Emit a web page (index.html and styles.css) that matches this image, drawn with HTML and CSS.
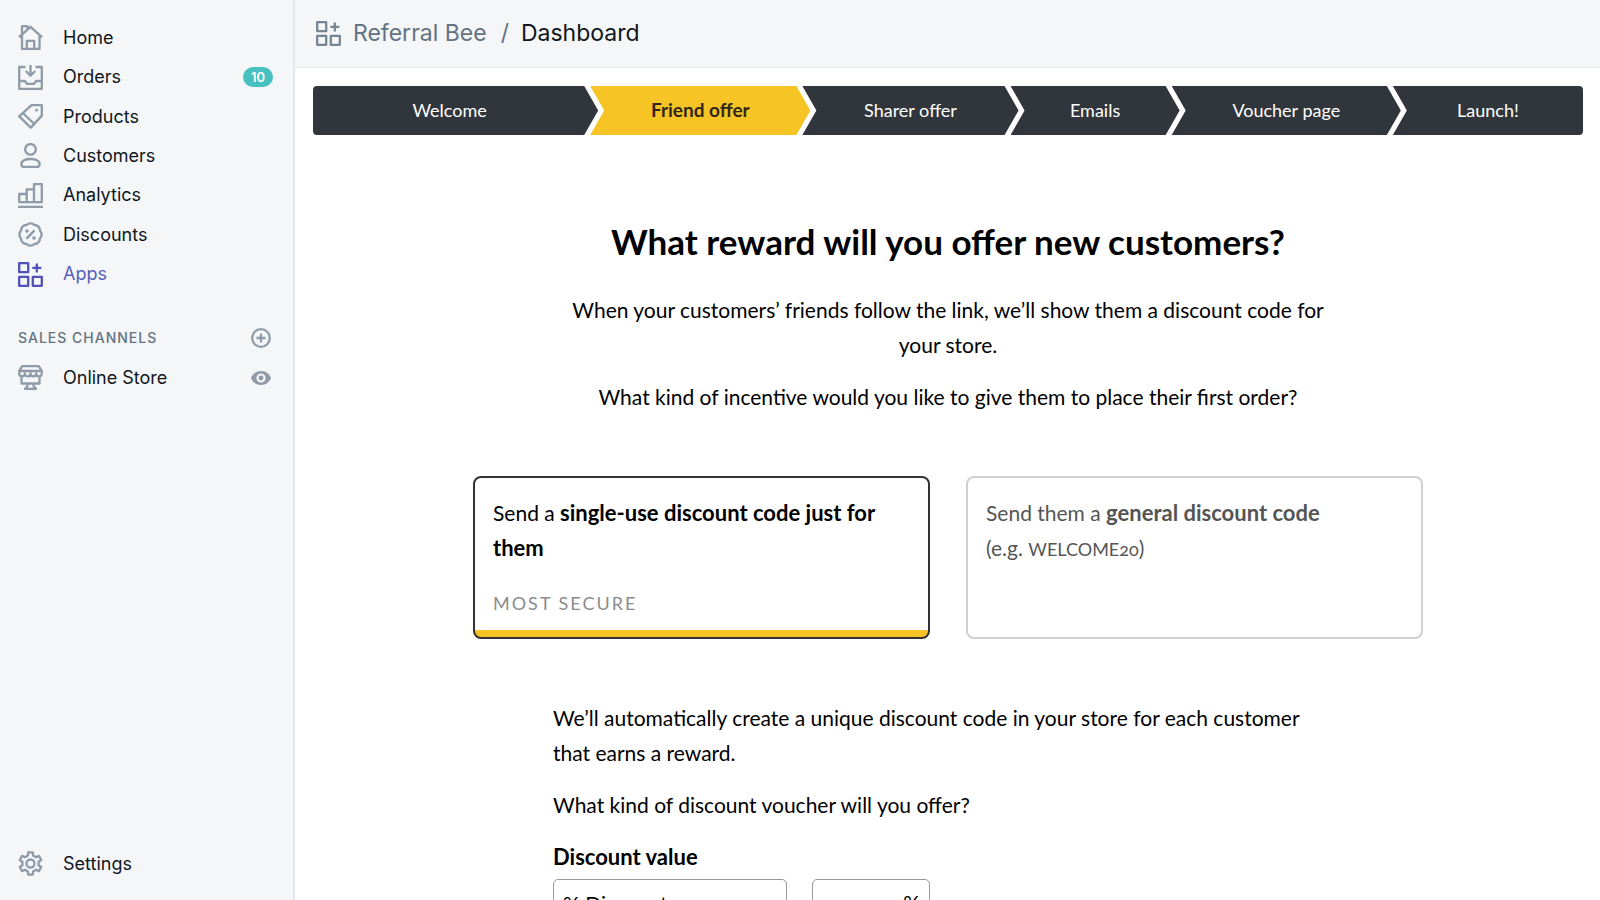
FILE: index.html
```html
<!DOCTYPE html>
<html lang="en">
<head>
  <meta charset="UTF-8">
  <meta name="viewport" content="width=device-width, initial-scale=1.0">
  <title>Referral Bee - Dashboard</title>
  <link rel="stylesheet" href="styles.css">
</head>
<body>
  <div class="app">
    <nav class="sidebar">
      <div class="nav-main">
        <a class="nav-item" href="#">
          <svg class="icon" viewBox="0 0 25 25"><path d="M1 12.2L12.5 1.8 24 12.2M4 9.8V24h17.5V9.8M4 9V1.2h5.5v2.5M8.8 24v-8.2h7.4V24"/></svg>
          Home
        </a>
        <a class="nav-item" href="#">
          <svg class="icon" viewBox="0 0 25 25"><path d="M7.5 2H1.2v21.8h22.6V2h-6.3M12.5 0v10M7.8 6l4.7 4.7L17.2 6M1.2 16h5.6l2.2 2.8h7l2.2-2.8h5.6"/></svg>
          Orders
          <span class="badge">10</span>
        </a>
        <a class="nav-item" href="#">
          <svg class="icon" viewBox="0 0 25 25"><path d="M13.6 1.2h10.2v10.4L12.8 23.6 1.2 12.4zM4.8 9l11.6 11"/><circle class="solid" cx="18.6" cy="6.2" r="1.4"/></svg>
          Products
        </a>
        <a class="nav-item" href="#">
          <svg class="icon" viewBox="0 0 25 25"><circle cx="12.5" cy="6.4" r="5.3"/><path d="M3.4 21c0-3.2 4-5 9.1-5s9.1 1.8 9.1 5c0 1.900-.7 2.800-2.200 2.800H5.600c-1.500 0-2.200-.9-2.200-2.800z"/></svg>
          Customers
        </a>
        <a class="nav-item" href="#">
          <svg class="icon" viewBox="0 0 25 25"><path d="M1.2 11h7.5v8.2H1.2zM8.700 19.200V6.400h7.300M16 1.200h7.800v18H16zM8.700 19.200H16M0 23.800h25"/></svg>
          Analytics
        </a>
        <a class="nav-item" href="#">
          <svg class="icon" viewBox="0 0 25 25"><path d="M22 8.600a5.500 5.500 0 0 1 0 7.800 5.500 5.500 0 0 1-5.600 5.600 5.500 5.500 0 0 1-7.800 0A5.500 5.500 0 0 1 3 16.400a5.500 5.500 0 0 1 0-7.800A5.500 5.500 0 0 1 8.600 3a5.500 5.500 0 0 1 7.800 0A5.500 5.500 0 0 1 22 8.600zM16.500 8.400l-8 8.200"/><circle class="solid" cx="9" cy="9" r="1.8"/><circle class="solid" cx="16" cy="16" r="1.8"/></svg>
          Discounts
        </a>
        <a class="nav-item active" href="#">
          <svg class="icon" viewBox="0 0 25 25"><path d="M1.2 1.2h9v9h-9zM1.2 14.800h9v9h-9zM14.800 14.800h9v9h-9zM18.800 1.400v9M14.300 5.900h9"/></svg>
          Apps
        </a>
      </div>

      <div class="nav-heading">
        <h2>Sales channels</h2>
        <button class="icon-button" aria-label="Add sales channel">
          <svg class="icon-small" viewBox="0 0 20 20"><circle cx="10" cy="10" r="8.8"/><path d="M10 5.500v9M5.500 10h9"/></svg>
        </button>
      </div>
      <div class="nav-row">
        <a class="nav-item" href="#">
          <svg class="icon" viewBox="0 0 25 25"><path d="M4.200 1.200h16.600l3 5v2.300a2.800 2.800 0 0 1-5.600 0 2.800 2.800 0 0 1-5.700 0 2.800 2.800 0 0 1-5.700 0 2.800 2.800 0 0 1-5.600 0V6.200zM1.500 6h22M3.500 11v7.500h18V11M9.500 18.500v2.500l-2.500 2.800h11L15.500 21v-2.500"/></svg>
          Online Store
        </a>
        <button class="icon-button" aria-label="View online store">
          <svg class="icon-small" viewBox="0 0 20 20"><path class="solid" fill-rule="evenodd" d="M0 10c1.500-4.200 5.200-7 10-7s8.500 2.800 10 7c-1.500 4.200-5.200 7-10 7S1.500 14.200 0 10zm10-4.600a4.600 4.600 0 1 0 0 9.200 4.600 4.600 0 0 0 0-9.200z"/><circle class="solid" cx="10" cy="10" r="2.4"/></svg>
        </button>
      </div>

      <a class="nav-item nav-settings" href="#">
        <svg class="icon" viewBox="0 0 25 25"><path d="M9.900 4.600l.3-3.200h4.600l.3 3.200 3 1.700 2.800-1.400L23.200 9l-2.600 1.800v3.400l2.600 1.800-2.300 4.100-2.800-1.400-3 1.700-.3 3.200h-4.600l-.3-3.200-3-1.700-2.800 1.400L1.800 16l2.600-1.800v-3.400L1.800 9l2.300-4.100 2.800 1.400z"/><circle cx="12.5" cy="12.5" r="4"/></svg>
        Settings
      </a>
    </nav>

    <div class="page">
      <header class="topbar">
        <svg class="icon" viewBox="0 0 25 25"><path d="M1.2 1.2h9v9h-9zM1.2 14.800h9v9h-9zM14.800 14.800h9v9h-9zM18.800 1.400v9M14.300 5.900h9"/></svg>
        <a class="crumb" href="#">Referral Bee</a>
        <span class="crumb-sep">/</span>
        <span class="crumb-current">Dashboard</span>
      </header>

      <main class="content">
        <nav class="steps">
          <a class="step step-welcome" href="#">Welcome</a>
          <a class="step step-friend current" href="#">Friend offer</a>
          <a class="step step-sharer" href="#">Sharer offer</a>
          <a class="step step-emails" href="#">Emails</a>
          <a class="step step-voucher" href="#">Voucher page</a>
          <a class="step step-launch" href="#">Launch!</a>
        </nav>

        <section class="intro">
          <h1>What reward will you offer new customers?</h1>
          <p>When your customers’ friends follow the link, we’ll show them a discount code for<br>your store.</p>
          <p>What kind of incentive would you like to give them to place their first order?</p>
        </section>

        <form>
          <div class="options">
            <label class="option">
              <input type="radio" name="codeType" value="single" checked>
              <span>Send a <strong>single-use discount code just for<br>them</strong></span>
              <span class="option-note">Most secure</span>
            </label>
            <label class="option">
              <input type="radio" name="codeType" value="general">
              <span>Send them a <strong>general discount code</strong><br>(e.g. <span class="code">WELCOME20</span>)</span>
            </label>
          </div>

          <div class="details">
            <p>We’ll automatically create a unique discount code in your store for each customer<br>that earns a reward.</p>
            <p>What kind of discount voucher will you offer?</p>
            <label class="field-label" for="discountType">Discount value</label>
            <div class="fields">
              <select id="discountType">
                <option>% Discount</option>
              </select>
              <div class="amount">
                <input type="text" id="discountAmount" aria-label="Discount amount">
                <span>%</span>
              </div>
            </div>
          </div>
        </form>
      </main>
    </div>
  </div>
</body>
</html>
```
FILE: styles.css
```css
* {
  box-sizing: border-box;
}
body {
  margin: 0;
  font-family: Lato, sans-serif;
  font-size: 21px;
  line-height: 35px;
  color: #000;
  background: #fff;
}
a {
  color: inherit;
  text-decoration: none;
}
.app {
  display: flex;
  height: 100vh;
}

/* Sidebar */
.sidebar {
  display: flex;
  flex-direction: column;
  flex: none;
  width: 295px;
  padding: 18px 20px 17px 18px;
  background: #f4f6f8;
  border-right: 2px solid #e3e6ec;
  font-family: Inter, sans-serif;
  font-size: 18px;
  line-height: 24px;
  color: #10161d;
}
.nav-main {
  display: grid;
  grid-auto-rows: 1fr;
  min-height: 276px;
}
.nav-item {
  display: flex;
  align-items: center;
  gap: 20px;
  min-height: 39px;
}
.nav-item.active {
  color: #5460bd;
}
.icon,
.icon-small {
  flex: none;
  width: 25px;
  height: 25px;
  fill: none;
  stroke: #8f9ba8;
  stroke-width: 2.3;
  stroke-linejoin: round;
}
.icon-small {
  display: block;
  width: 20px;
  height: 20px;
}
.active .icon {
  stroke: #5050b8;
}
.solid {
  fill: #8f9ba8;
  stroke: none;
}
.badge {
  margin-left: auto;
  padding: 0 8px;
  border-radius: 10px;
  background: #47c1bf;
  color: #fff;
  font-size: 13px;
  font-weight: 600;
  line-height: 20px;
}
.nav-heading,
.nav-row {
  display: flex;
  align-items: center;
  justify-content: space-between;
  padding-right: 2px;
}
.nav-heading {
  min-height: 40px;
  margin-top: 24px;
}
.nav-heading h2 {
  margin: 0;
  font-size: 14px;
  font-weight: 500;
  letter-spacing: 1px;
  text-transform: uppercase;
  color: #637381;
}
.icon-button {
  padding: 0;
  border: 0;
  background: none;
  cursor: pointer;
}
.nav-settings {
  margin-top: auto;
}

/* Page header */
.page {
  display: flex;
  flex-direction: column;
  flex: 1;
  min-width: 0;
}
.topbar {
  display: flex;
  align-items: center;
  flex: none;
  height: 68px;
  padding: 0 21px;
  background: #f4f6f8;
  border-bottom: 1px solid #e3e6ea;
  font-family: Inter, sans-serif;
  font-size: 23px;
  color: #10161d;
}
.topbar .icon {
  stroke: #758594;
}
.crumb {
  margin-left: 12px;
}
.crumb,
.crumb-sep {
  color: #637381;
}
.crumb-sep {
  margin: 0 12px 0 14px;
}
.content {
  flex: 1;
  overflow: auto;
  padding: 18px 17px 40px 18px;
  scrollbar-width: none;
}

/* Steps */
.steps {
  display: flex;
  border-radius: 4px;
  overflow: hidden;
  font-size: 18px;
  line-height: 48px;
  color: #fff;
}
.step {
  margin-left: -8px;
  padding-bottom: 1px;
  background: #31363d;
  text-align: center;
  white-space: nowrap;
  clip-path: polygon(0 0, calc(100% - 14px) 0, 100% 50%, calc(100% - 14px) 100%, 0 100%, 14px 50%);
}
.step-welcome {
  flex: 273 1 0;
  margin-left: 0;
  padding-right: 12px;
  clip-path: polygon(0 0, calc(100% - 14px) 0, 100% 50%, calc(100% - 14px) 100%, 0 100%);
}
.step-friend {
  flex: 220 1 0;
}
.step-sharer {
  flex: 216 1 0;
}
.step-emails {
  flex: 169 1 0;
}
.step-voucher {
  flex: 229 1 0;
}
.step-launch {
  flex: 190 1 0;
  clip-path: polygon(0 0, 100% 0, 100% 100%, 0 100%, 14px 50%);
}
.step.current {
  background: #f6c425;
  color: #31261a;
  font-size: 19px;
  font-weight: bold;
}

/* Intro */
.intro {
  margin-top: 82px;
  text-align: center;
}
h1 {
  margin: 0;
  font-size: 35px;
  line-height: 48px;
}
p {
  margin: 0 0 17px;
}
.intro h1 {
  margin-bottom: 27px;
}

/* Options */
.options {
  display: grid;
  grid-template-columns: 1fr 1fr;
  gap: 36px;
  max-width: 950px;
  margin: 62px auto 0;
}
.option {
  display: flex;
  flex-direction: column;
  position: relative;
  min-height: 163px;
  padding: 17px 18px 16px;
  border: 2px solid #d0d0d0;
  border-radius: 8px;
  color: #555;
  cursor: pointer;
}
.option:has(input:checked) {
  border-color: #333;
  background: linear-gradient(#f6c425, #f6c425) bottom / 100% 7px no-repeat;
  color: #000;
}
.option strong {
  font-size: 22px;
}
.option input {
  position: absolute;
  opacity: 0;
}
.option-note {
  margin-top: 21px;
  font-size: 18px;
  letter-spacing: 2px;
  text-transform: uppercase;
  color: #8c8c8c;
}
.code {
  font-size: 18px;
  font-variant-numeric: oldstyle-nums;
}

/* Voucher details */
.details {
  max-width: 790px;
  margin: 61px auto 0;
}
.field-label {
  display: block;
  margin-bottom: 5px;
  font-size: 22px;
  font-weight: bold;
}
.fields {
  display: flex;
  gap: 25px;
}
.fields select,
.amount {
  height: 48px;
  border: 1px solid #999;
  border-radius: 5px;
  background: #fff;
}
.fields select {
  width: 234px;
  padding: 0 9px;
  font: inherit;
  color: #000;
  appearance: none;
}
.amount {
  display: flex;
  align-items: center;
  width: 118px;
  padding: 0 9px;
}
.amount input {
  flex: 1;
  min-width: 0;
  border: 0;
  font: inherit;
  text-align: right;
}
.amount span {
  line-height: 24px;
}
```
